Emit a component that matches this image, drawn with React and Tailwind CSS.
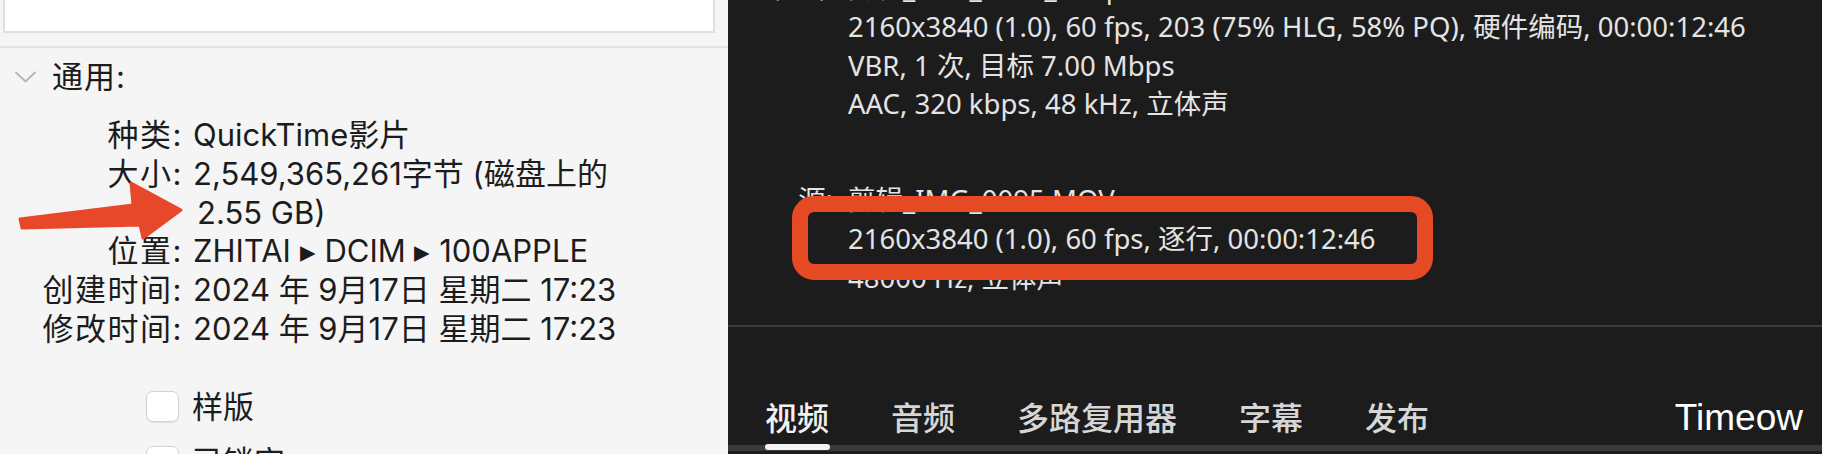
import React from 'react';

const leftFont = { fontFamily: 'Inter, "Noto Sans CJK SC", sans-serif' };
const rightFont = { fontFamily: '"Noto Sans", "Noto Sans CJK SC", sans-serif' };

const infoRows = [
  { label: '种类:', lines: ['QuickTime影片'] },
  { label: '大小:', lines: ['2,549,365,261字节 (磁盘上的', '2.55 GB)'] },
  { label: '位置:', lines: ['ZHITAI ▸ DCIM ▸ 100APPLE'] },
  { label: '创建时间:', lines: ['2024 年 9月17日 星期二 17:23'] },
  { label: '修改时间:', lines: ['2024 年 9月17日 星期二 17:23'] },
];

const tabs = ['视频', '音频', '多路复用器', '字幕', '发布'];

const InfoPanel = () => (
  <div className="relative w-[728px] h-full bg-[#f5f5f5] text-[#1c1c1c]" style={leftFont}>
    {/* top field, cut off */}
    <div className="ml-[3px] w-[712px] h-[33px] bg-white border-x-2 border-b-2 border-[#dedede]" />
    <div className="mt-[13px] h-[2px] bg-[#e2e2e2]" />

    <div className="mt-[10px] flex items-center h-[38px]">
      <svg className="ml-[15px] w-[21px] h-[12px]" viewBox="0 0 21 12" fill="none">
        <path d="M1 1.5 L10.5 10.5 L20 1.5" stroke="#b8b8b8" strokeWidth="2" strokeLinecap="round" strokeLinejoin="round" />
      </svg>
      <span className="ml-[16px] text-[31px] leading-[38px] tracking-[1px]">通用:</span>
    </div>

    <div className="mt-[20px] text-[31px] leading-[38.8px]">
      {infoRows.map((row) => (
        <div key={row.label} className="grid grid-cols-[183px_1fr] gap-x-[10px] whitespace-nowrap">
          <div className="text-right tracking-[1.5px]">{row.label}</div>
          <div>
            {row.lines.map((l, i) => (
              <div key={i} className={i > 0 ? 'pl-[4px]' : ''}>{l}</div>
            ))}
          </div>
        </div>
      ))}
    </div>

    <div className="mt-[42px] flex flex-col gap-[24px] pl-[146px]">
      {['样版', '已锁定'].map((t) => (
        <label key={t} className="flex items-center gap-[13px] h-[31px]">
          <span className="w-[33px] h-[31px] rounded-[7px] bg-white border border-[#d2d2d2] shadow-[0_1px_1px_rgba(0,0,0,0.08)]" />
          <span className="text-[31px] leading-[31px]">{t}</span>
        </label>
      ))}
    </div>

    {/* annotation arrow */}
    <svg className="absolute left-0 top-0 w-[200px] h-[260px]" viewBox="0 0 200 260">
      <polygon
        points="20,219 133,205 131,183 181,210 143,238 140,225 22,228"
        fill="#e8482a"
        stroke="#e8482a"
        strokeWidth="3"
        strokeLinejoin="round"
      />
    </svg>
  </div>
);

const Line = ({ label, children }) => (
  <div className="grid grid-cols-[105px_1fr] gap-x-[15px] whitespace-nowrap">
    <div className="text-right">{label}</div>
    <div>{children}</div>
  </div>
);

const EncoderPanel = () => (
  <div className="relative flex-1 h-full bg-[#1c1c1c] flex flex-col" style={rightFont}>
    <div className="relative h-[325px] overflow-hidden text-[27.5px] leading-[38.8px] text-[#e4e4e4]">
      <div className="-mt-[31px]">
        <Line label="输出:">剪辑_IMG_0095_1.mp4</Line>
        <Line label="">2160x3840 (1.0), 60 fps, 203 (75% HLG, 58% PQ), 硬件编码, 00:00:12:46</Line>
        <Line label="">VBR, 1 次, 目标 7.00 Mbps</Line>
        <Line label="">AAC, 320 kbps, 48 kHz, 立体声</Line>
        <div className="h-[57px]" />
        <Line label="源:">剪辑_IMG_0095.MOV</Line>
        <Line label="">2160x3840 (1.0), 60 fps, 逐行, 00:00:12:46</Line>
        <Line label="">48000 Hz, 立体声</Line>
      </div>
      {/* annotation frame */}
      <div className="absolute left-[64px] top-[196px] w-[641px] h-[84px] rounded-[22px] border-[16px] border-[#e64a24]" />
    </div>

    <div className="h-[2px] bg-[#3a3a3a]" />

    <div className="flex-1 flex flex-col justify-end">
      <div className="flex gap-[62px] pl-[37px] text-[32px] leading-[40px] font-medium text-[#d6d6d6]">
        {tabs.map((t, i) => (
          <span key={t} className={i === 0 ? 'text-[#f2f2f2]' : ''}>{t}</span>
        ))}
      </div>
      <div className="mt-[7px] mb-[3px] h-[6px] bg-[#3a3a3a] relative">
        <div className="absolute left-[37px] -top-[1px] w-[65px] h-[6px] rounded-full bg-[#f4f4f4]" />
      </div>
    </div>

    <span
      className="absolute right-[19px] top-[399px] text-[37px] leading-none text-white"
      style={{ fontFamily: '"Liberation Sans", Arial, sans-serif' }}
    >
      Timeow
    </span>
  </div>
);

export default function App() {
  return (
    <div className="flex w-[1822px] h-[454px] overflow-hidden">
      <InfoPanel />
      <EncoderPanel />
    </div>
  );
}
